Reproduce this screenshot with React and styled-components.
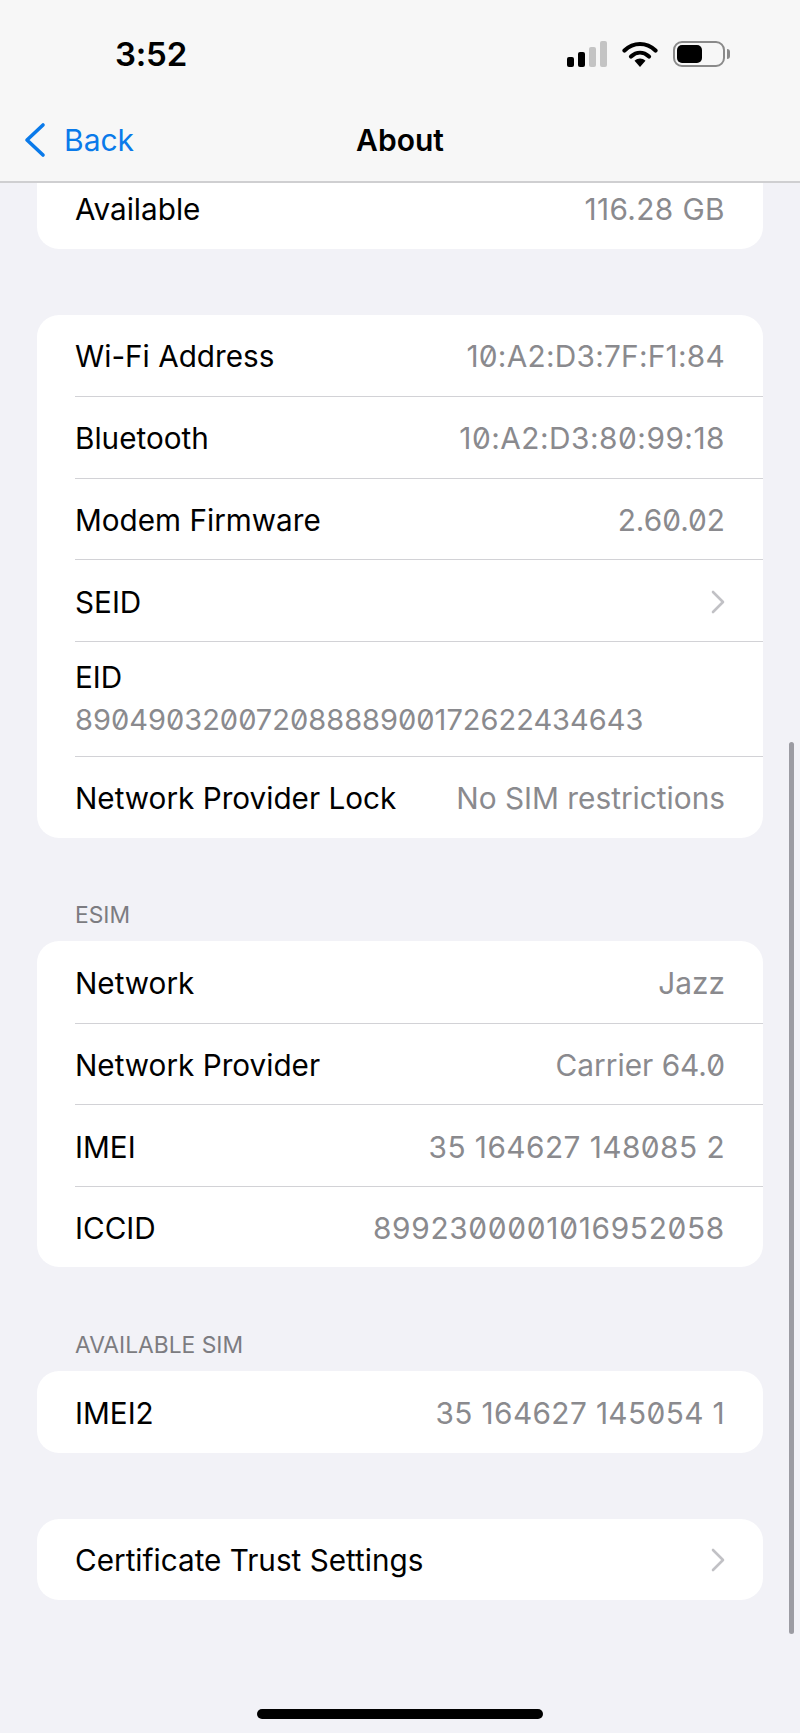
import React from 'react';
import styled, { createGlobalStyle } from 'styled-components';

const sections = [
  {
    rows: [{ label: 'Available', value: '116.28 GB', track: 0.4 }],
    clipped: true,
  },
  {
    rows: [
      { label: 'Wi-Fi Address', value: '10:A2:D3:7F:F1:84', track: 0.25 },
      { label: 'Bluetooth', value: '10:A2:D3:80:99:18', track: 0.5 },
      { label: 'Modem Firmware', value: '2.60.02' },
      { label: 'SEID', chevron: true },
      { label: 'EID', below: '89049032007208888900172622434643' },
      { label: 'Network Provider Lock', value: 'No SIM restrictions' },
    ],
  },
  {
    title: 'ESIM',
    rows: [
      { label: 'Network', value: 'Jazz' },
      { label: 'Network Provider', value: 'Carrier 64.0' },
      { label: 'IMEI', value: '35 164627 148085 2', track: 0.45 },
      { label: 'ICCID', value: '8992300001016952058', track: 0.7 },
    ],
  },
  {
    title: 'AVAILABLE SIM',
    rows: [{ label: 'IMEI2', value: '35 164627 145054 1', track: 0.37 }],
  },
  {
    rows: [{ label: 'Certificate Trust Settings', chevron: true }],
  },
];

const Chevron = () => (
  <ChevronIcon viewBox="0 0 14 24" fill="none">
    <path d="M2 2l10 10L2 22" stroke="#c1c1c5" strokeWidth="2.6" strokeLinecap="round" strokeLinejoin="round" />
  </ChevronIcon>
);

const Row = ({ label, value, track, below, chevron }) => {
  if (below) {
    return (
      <TallRow>
        <Label>{label}</Label>
        <LongValue>{below}</LongValue>
      </TallRow>
    );
  }
  return (
    <PlainRow>
      <Label>{label}</Label>
      {value && <Value $track={track}>{value}</Value>}
      {chevron && <Chevron />}
    </PlainRow>
  );
};

export default function App() {
  return (
    <Screen>
      <GlobalStyle />
      <Header>
        <StatusBar>
          <Time>3:52</Time>
          <StatusIcons>
            <svg width="40" height="26" viewBox="0 0 40 26">
              <rect x="0" y="16" width="7" height="10" rx="2" fill="#000" />
              <rect x="11" y="11" width="7" height="15" rx="2" fill="#000" />
              <rect x="22" y="6" width="7" height="20" rx="2" fill="#c4c4c4" />
              <rect x="33" y="0" width="7" height="26" rx="2" fill="#c4c4c4" />
            </svg>
            <svg width="36" height="26" viewBox="0 0 36 26">
              <path d="M2.500 9.500C11.500 .8 24.500 .8 33.500 9.500" fill="none" stroke="#000" strokeWidth="4.200" strokeLinecap="round" />
              <path d="M9 15.500C14.500 10.500 21.500 10.500 27 15.500" fill="none" stroke="#000" strokeWidth="4.200" strokeLinecap="round" />
              <path d="M12.500 19.800c3.500-3 7.500-3 11 0L18 26z" fill="#000" />
            </svg>
            <Battery>
              <BatteryFill />
            </Battery>
          </StatusIcons>
        </StatusBar>
        <NavBar>
          <BackLink>
            <svg width="23" height="36" viewBox="0 0 23 36" fill="none">
              <path d="M20 3L4 18l16 15" stroke="#0a7aea" strokeWidth="3.600" strokeLinecap="round" strokeLinejoin="round" />
            </svg>
            <span>Back</span>
          </BackLink>
          <NavTitle>About</NavTitle>
        </NavBar>
      </Header>
      <Scroller>
        {sections.map((section, i) => (
          <Section key={i} $clipped={section.clipped} $titled={!!section.title}>
            {section.title && <SectionTitle>{section.title}</SectionTitle>}
            <Card $clipped={section.clipped}>
              {section.rows.map(row => (
                <Row key={row.label} {...row} />
              ))}
            </Card>
          </Section>
        ))}
      </Scroller>
      <ScrollThumb />
      <HomeIndicator />
    </Screen>
  );
}

const GlobalStyle = createGlobalStyle`
  html, body {
    margin: 0;
    padding: 0;
    background: #f2f2f7;
  }
`;

const Screen = styled.div`
  position: relative;
  width: 800px;
  height: 1733px;
  overflow: hidden;
  display: flex;
  flex-direction: column;
  background: #f2f2f7;
  color: #000;
  font-family: Inter, "Liberation Sans", sans-serif;
  font-size: 29.7px;
`;

const Header = styled.header`
  flex: none;
  height: 181px;
  background: #f7f7f7;
  border-bottom: 2px solid #cfcfd1;
  display: flex;
  flex-direction: column;
`;

const StatusBar = styled.div`
  height: 108px;
  display: flex;
  align-items: center;
  justify-content: space-between;
  padding: 0 70px 0 115px;
`;

const Time = styled.div`
  font-size: 33px;
  font-weight: 600;
  letter-spacing: -0.2px;
`;

const StatusIcons = styled.div`
  display: flex;
  align-items: center;
  gap: 15px;
`;

const Battery = styled.div`
  position: relative;
  box-sizing: border-box;
  width: 52px;
  height: 26px;
  margin-right: 5px;
  border: 2px solid #8a8a8a;
  border-radius: 9px;
  padding: 2px;

  &::after {
    content: '';
    position: absolute;
    right: -7px;
    top: 6px;
    width: 3px;
    height: 10px;
    border-radius: 0 3px 3px 0;
    background: #8a8a8a;
  }
`;

const BatteryFill = styled.div`
  width: 25px;
  height: 100%;
  background: #000;
  border-radius: 5px;
`;

const NavBar = styled.nav`
  position: relative;
  flex: 1;
  display: flex;
  align-items: center;
  justify-content: center;
  padding-bottom: 10px;
`;

const BackLink = styled.div`
  position: absolute;
  left: 23px;
  display: flex;
  align-items: center;
  gap: 18px;
  color: #0a7aea;
  font-size: 30px;
`;

const NavTitle = styled.div`
  font-size: 30px;
  font-weight: 600;
`;

const Scroller = styled.main`
  flex: 1;
  overflow: hidden;
  padding: 0 37px;
`;

const Section = styled.section`
  margin-top: ${p => (p.$clipped ? '0' : p.$titled ? '63.5px' : '66px')};
`;

const SectionTitle = styled.div`
  padding: 0 38px 12px;
  height: 28px;
  line-height: 28px;
  font-size: 22.8px;
  color: #7c7c81;
`;

const Card = styled.div`
  background: #fff;
  border-radius: ${p => (p.$clipped ? '0 0 22px 22px' : '22px')};
  overflow: hidden;
  ${p => p.$clipped && 'margin-top: -16px;'}
`;

const PlainRow = styled.div`
  box-sizing: border-box;
  height: 81.6px;
  margin-left: 38px;
  padding: 2px 38px 0 0;
  display: flex;
  align-items: center;
  justify-content: space-between;

  & + & , div + & {
    border-top: 1px solid #d2d2d6;
  }
`;

const TallRow = styled.div`
  box-sizing: border-box;
  height: 115px;
  margin-left: 38px;
  padding-top: 18px;
  border-top: 1px solid #d2d2d6;
  display: flex;
  flex-direction: column;
  gap: 9px;
`;

const Label = styled.span`
  line-height: 34px;
`;

const Value = styled.span`
  line-height: 34px;
  color: #8a8a8e;
  font-size: 29.8px;
  font-variant-numeric: slashed-zero;
  letter-spacing: ${p => p.$track || 0}px;
`;

const LongValue = styled(Value)`
  font-size: 29px;
`;

const ChevronIcon = styled.svg`
  width: 14px;
  height: 24px;
`;

const ScrollThumb = styled.div`
  position: absolute;
  right: 6px;
  top: 742px;
  width: 5px;
  height: 892px;
  border-radius: 3px;
  background: #9c9ca3;
`;

const HomeIndicator = styled.div`
  position: absolute;
  left: 257px;
  bottom: 14px;
  width: 286px;
  height: 10px;
  border-radius: 5px;
  background: #000;
`;
